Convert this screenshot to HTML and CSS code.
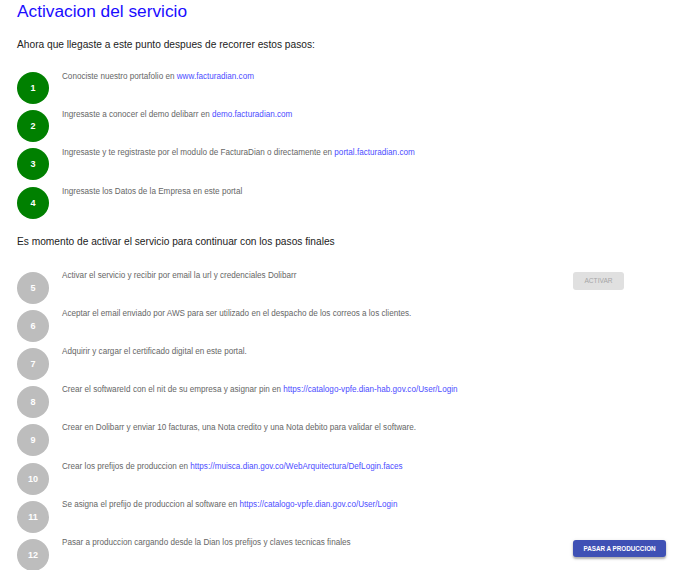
FILE: index.html
```html
<!DOCTYPE html>
<html lang="es">
<head>
<meta charset="utf-8">
<title>Activacion del servicio</title>
<link rel="stylesheet" href="styles.css">
</head>
<body>
<div class="page">
  <h1 class="title">Activacion del servicio</h1>
  <p class="lead">Ahora que llegaste a este punto despues de recorrer estos pasos:</p>

  <ol class="steps">
    <li class="step done">
      <span class="num">1</span>
      <span class="text">Conociste nuestro portafolio en <a href="#">www.facturadian.com</a></span>
    </li>
    <li class="step done">
      <span class="num">2</span>
      <span class="text">Ingresaste a conocer el demo delibarr en <a href="#">demo.facturadian.com</a></span>
    </li>
    <li class="step done">
      <span class="num">3</span>
      <span class="text">Ingresaste y te registraste por el modulo de FacturaDian o directamente en <a href="#">portal.facturadian.com</a></span>
    </li>
    <li class="step done">
      <span class="num">4</span>
      <span class="text">Ingresaste los Datos de la Empresa en este portal</span>
    </li>
  </ol>

  <p class="lead lead-second">Es momento de activar el servicio para continuar con los pasos finales</p>

  <ol class="steps">
    <li class="step">
      <span class="num">5</span>
      <span class="text">Activar el servicio y recibir por email la url y credenciales Dolibarr</span>
      <span class="action"><button class="btn btn-disabled" disabled>Activar</button></span>
    </li>
    <li class="step">
      <span class="num">6</span>
      <span class="text">Aceptar el email enviado por AWS para ser utilizado en el despacho de los correos a los clientes.</span>
    </li>
    <li class="step">
      <span class="num">7</span>
      <span class="text">Adquirir y cargar el certificado digital en este portal.</span>
    </li>
    <li class="step">
      <span class="num">8</span>
      <span class="text">Crear el softwareId con el nit de su empresa y asignar pin en <a href="#">https://catalogo-vpfe.dian-hab.gov.co/User/Login</a></span>
    </li>
    <li class="step">
      <span class="num">9</span>
      <span class="text">Crear en Dolibarr y enviar 10 facturas, una Nota credito y una Nota debito para validar el software.</span>
    </li>
    <li class="step">
      <span class="num">10</span>
      <span class="text">Crear los prefijos de produccion en <a href="#">https://muisca.dian.gov.co/WebArquitectura/DefLogin.faces</a></span>
    </li>
    <li class="step">
      <span class="num">11</span>
      <span class="text">Se asigna el prefijo de produccion al software en <a href="#">https://catalogo-vpfe.dian.gov.co/User/Login</a></span>
    </li>
    <li class="step">
      <span class="num">12</span>
      <span class="text">Pasar a produccion cargando desde la Dian los prefijos y claves tecnicas finales</span>
      <span class="action"><button class="btn btn-primary">Pasar a produccion</button></span>
    </li>
  </ol>
</div>
</body>
</html>
```

FILE: styles.css
```css
html, body {
  margin: 0;
  padding: 0;
  background: #ffffff;
}

body {
  font-family: "Liberation Sans", Arial, sans-serif;
  color: #333333;
}

.page {
  padding: 0 16px 0 17px;
}

.title {
  margin: 1px 0 0;
  font-size: 17.3px;
  line-height: 20px;
  font-weight: normal;
  color: #1a0dff;
}

.lead {
  margin: 18px 0 0;
  font-size: 10.2px;
  line-height: 12px;
  color: #222222;
}

.lead-second {
  margin-top: 17px;
}

.steps {
  list-style: none;
  margin: 21px 0 0;
  padding: 0;
}

.lead-second + .steps {
  margin-top: 23px;
}

.step {
  display: flex;
  align-items: flex-start;
  height: 32px;
  margin-bottom: 6.2px;
}

.step:last-child {
  margin-bottom: 0;
}

.num {
  flex: none;
  width: 32px;
  height: 32px;
  border-radius: 50%;
  background: #bdbdbd;
  color: #ffffff;
  font-size: 9px;
  font-weight: bold;
  display: flex;
  align-items: center;
  justify-content: center;
  margin-top: 1px;
}

.done .num {
  background: #008000;
  margin-top: 0;
}

.text {
  flex: 1;
  margin-left: 13px;
  font-size: 8.15px;
  line-height: 10px;
  color: #666666;
}

.text a {
  color: #4d4dff;
  text-decoration: none;
}

.action {
  flex: none;
  width: 100px;
}

.btn {
  display: block;
  border: none;
  border-radius: 3px;
  font-family: "Liberation Sans", Arial, sans-serif;
  text-transform: uppercase;
  padding: 0;
  height: 18px;
  cursor: pointer;
}

.btn-disabled {
  width: 51px;
  background: #e0e0e0;
  color: #a6a6a6;
  font-size: 6.6px;
  margin-top: 1px;
}

.btn-primary {
  width: 93px;
  height: 17px;
  background: #3f51b5;
  color: #ffffff;
  font-size: 6.3px;
  font-weight: bold;
  margin-top: 2px;
  box-shadow: 0 2px 2px rgba(0, 0, 0, 0.25), 0 1px 4px rgba(0, 0, 0, 0.12);
}
```
